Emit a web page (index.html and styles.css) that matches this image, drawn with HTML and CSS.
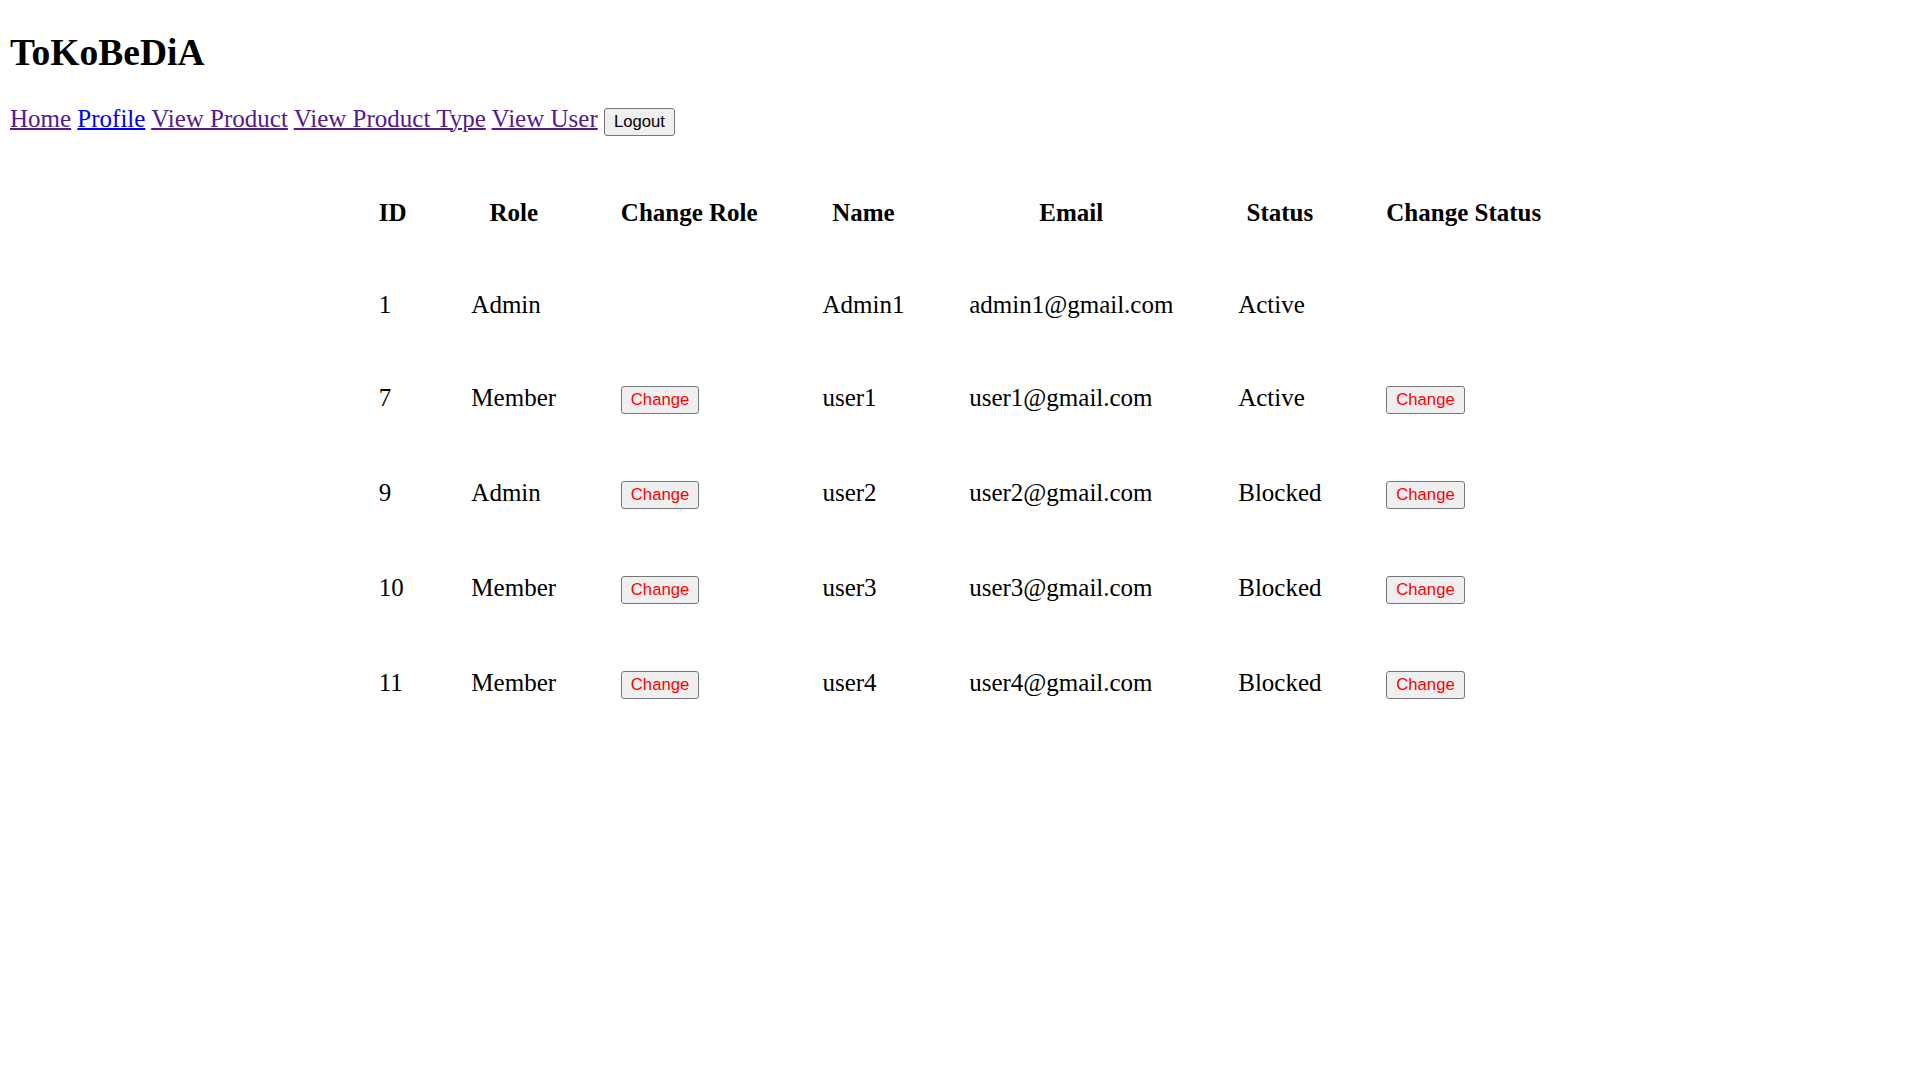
FILE: index.html
```html
<!DOCTYPE html>
<html lang="en">
<head>
<meta charset="utf-8">
<title>ToKoBeDiA - View User</title>
<link rel="stylesheet" href="styles.css">
</head>
<body>
<header class="site-header">
  <h1 class="brand">ToKoBeDiA</h1>
</header>
<nav class="nav">
  <a class="nav-link visited" href="#">Home</a>
  <a class="nav-link" href="#">Profile</a>
  <a class="nav-link visited" href="#">View Product</a>
  <a class="nav-link visited" href="#">View Product Type</a>
  <a class="nav-link visited" href="#">View User</a>
  <button class="btn" type="button">Logout</button>
</nav>
<table class="users">
  <thead>
    <tr>
      <th>ID</th>
      <th>Role</th>
      <th>Change Role</th>
      <th>Name</th>
      <th>Email</th>
      <th>Status</th>
      <th>Change Status</th>
    </tr>
  </thead>
  <tbody>
    <tr>
      <td>1</td>
      <td>Admin</td>
      <td></td>
      <td>Admin1</td>
      <td>admin1@gmail.com</td>
      <td>Active</td>
      <td></td>
    </tr>
    <tr>
      <td>7</td>
      <td>Member</td>
      <td><button class="btn btn-change" type="button">Change</button></td>
      <td>user1</td>
      <td>user1@gmail.com</td>
      <td>Active</td>
      <td><button class="btn btn-change" type="button">Change</button></td>
    </tr>
    <tr>
      <td>9</td>
      <td>Admin</td>
      <td><button class="btn btn-change" type="button">Change</button></td>
      <td>user2</td>
      <td>user2@gmail.com</td>
      <td>Blocked</td>
      <td><button class="btn btn-change" type="button">Change</button></td>
    </tr>
    <tr>
      <td>10</td>
      <td>Member</td>
      <td><button class="btn btn-change" type="button">Change</button></td>
      <td>user3</td>
      <td>user3@gmail.com</td>
      <td>Blocked</td>
      <td><button class="btn btn-change" type="button">Change</button></td>
    </tr>
    <tr>
      <td>11</td>
      <td>Member</td>
      <td><button class="btn btn-change" type="button">Change</button></td>
      <td>user4</td>
      <td>user4@gmail.com</td>
      <td>Blocked</td>
      <td><button class="btn btn-change" type="button">Change</button></td>
    </tr>
  </tbody>
</table>
</body>
</html>
```
FILE: styles.css
```css
html {
  background: #ffffff;
}

body {
  margin: 10px;
  font-family: "Liberation Serif", "Times New Roman", serif;
  font-size: 25px;
  color: #000000;
}

.site-header {
  display: block;
}

.brand {
  font-size: 37.5px;
  font-weight: bold;
  margin: 20.5px 0 31.5px;
}

.nav {
  display: block;
}

.nav-link {
  color: #0000ee;
  text-decoration: underline;
  text-decoration-thickness: 2px;
}

.nav-link.visited {
  color: #551a8b;
}

.btn {
  font-family: "Liberation Sans", Arial, sans-serif;
  font-size: 16.67px;
  color: #000000;
  background: #efefef;
  border: 1px solid #767676;
  border-radius: 3px;
  padding: 3px 9px;
  margin: 0;
}

.btn-change {
  color: #ff0000;
}

.users {
  margin: 29.5px auto 0;
  border-collapse: separate;
  border-spacing: 2.5px;
}

.users th,
.users td {
  padding: 31px 31.4px;
  vertical-align: middle;
}

.users th {
  text-align: center;
  font-weight: bold;
}

.users td {
  text-align: left;
}
```
